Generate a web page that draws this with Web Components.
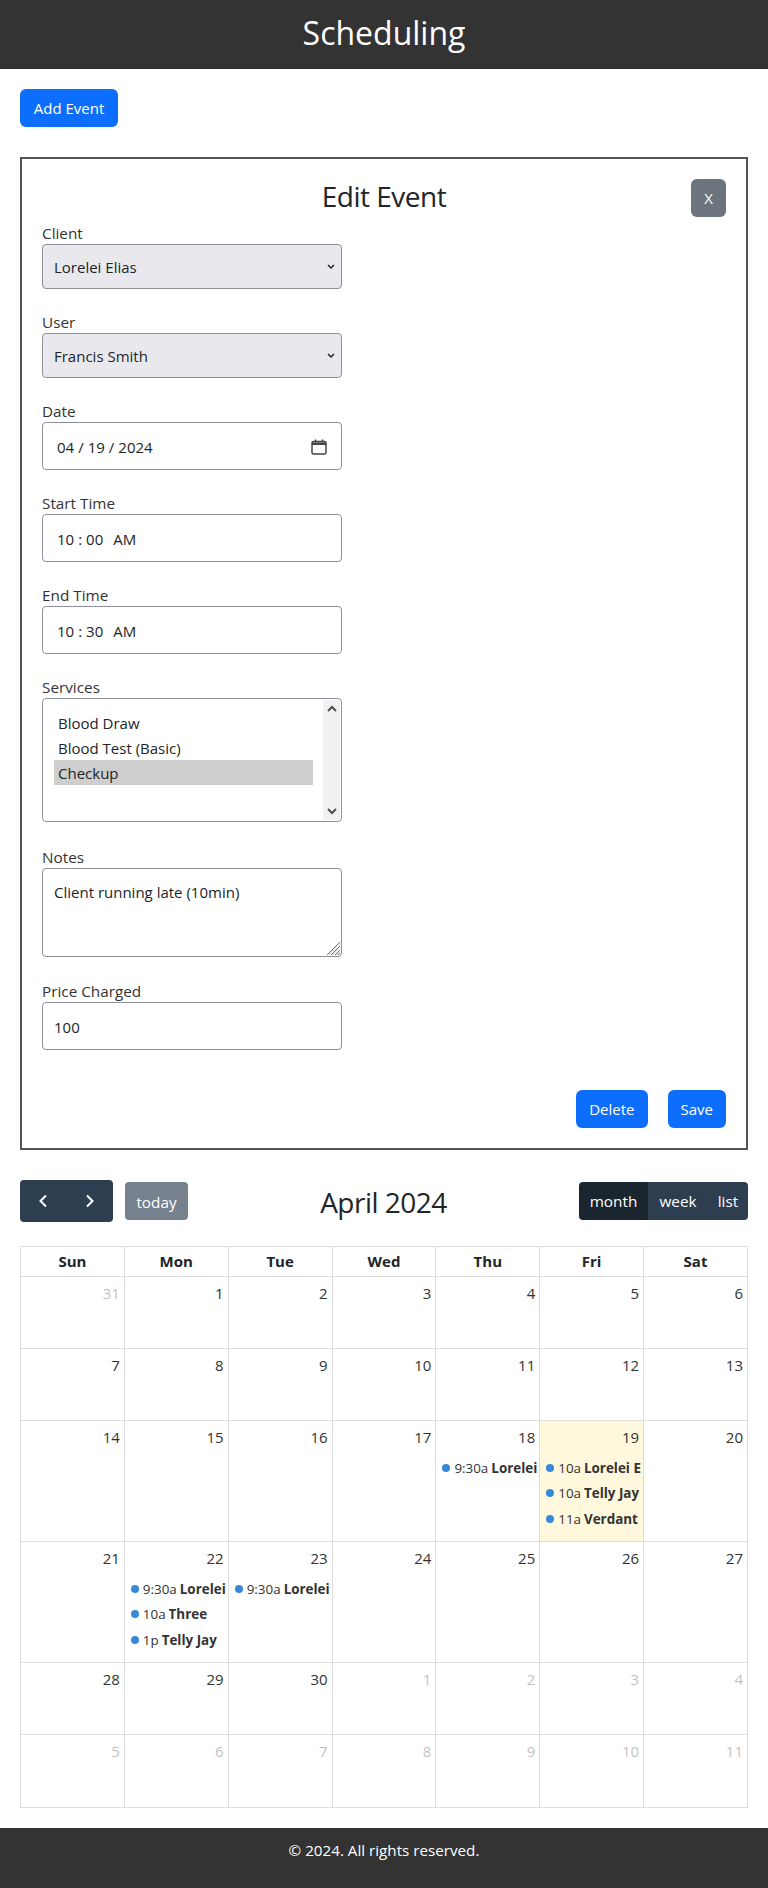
<!DOCTYPE html>
<html lang="en">
<head>
<meta charset="utf-8">
<title>Scheduling</title>
<style>
  html,body{margin:0;padding:0;}
  body{
    font-family:"Open Sans","Noto Sans",sans-serif;
    font-size:15px;
    line-height:1.5;
    color:#212529;
    background:#fff;
  }
</style>
</head>
<body>
<app-header>Scheduling</app-header>
<app-page>
  <blue-button slot="add">Add Event</blue-button>
  <event-form slot="form"></event-form>
  <cal-view slot="calendar"></cal-view>
</app-page>
<app-footer>© 2024. All rights reserved.</app-footer>

<script>
class AppHeader extends HTMLElement {
  constructor() {
    super();
    this.attachShadow({ mode: 'open' });
    this.shadowRoot.innerHTML = `
      <style>
        :host{
          display:block;
          background:#333;
          color:#fff;
          text-align:center;
          padding:13px 0 17px;
          font-size:32px;
          line-height:39px;
        }
      </style>
      <slot></slot>
    `;
  }
}
customElements.define('app-header', AppHeader);

class AppFooter extends HTMLElement {
  constructor() {
    super();
    this.attachShadow({ mode: 'open' });
    this.shadowRoot.innerHTML = `
      <style>
        :host{
          display:block;
          background:#333;
          color:#fff;
          text-align:center;
          padding:10px 0 27px;
          font-size:15.2px;
          line-height:24px;
        }
      </style>
      <slot></slot>
    `;
  }
}
customElements.define('app-footer', AppFooter);

class AppPage extends HTMLElement {
  constructor() {
    super();
    this.attachShadow({ mode: 'open' });
    this.shadowRoot.innerHTML = `
      <style>
        :host{
          display:flex;
          flex-direction:column;
          align-items:stretch;
          padding:20px;
          gap:30px;
        }
        .add{display:flex;}
      </style>
      <div class="add"><slot name="add"></slot></div>
      <slot name="form"></slot>
      <slot name="calendar"></slot>
    `;
  }
}
customElements.define('app-page', AppPage);

class BlueButton extends HTMLElement {
  constructor() {
    super();
    this.attachShadow({ mode: 'open' });
    this.shadowRoot.innerHTML = `
      <style>
        :host{
          display:inline-block;
          box-sizing:border-box;
          height:38px;
          padding:6px 13px;
          border-radius:6px;
          background:var(--btn-bg,#0d6efd);
          color:#fff;
          line-height:26px;
          text-align:center;
          cursor:pointer;
        }
        :host([slot=add]){min-width:98px;}
      </style>
      <slot></slot>
    `;
  }
}
customElements.define('blue-button', BlueButton);

class FormField extends HTMLElement {
  constructor() {
    super();
    this.attachShadow({ mode: 'open' });
    this.shadowRoot.innerHTML = `
      <style>
        :host{display:block;margin-bottom:20px;}
        .lbl{display:block;height:24px;line-height:27px;font-size:15.3px;color:#333;}
      </style>
      <span class="lbl"></span>
      <slot></slot>
    `;
  }
  connectedCallback(){
    this.shadowRoot.querySelector('.lbl').textContent=this.getAttribute('label');
  }
}
customElements.define('form-field', FormField);

class ListBox extends HTMLElement {
  constructor() {
    super();
    this.attachShadow({ mode: 'open' });
    this.shadowRoot.innerHTML = `
      <style>
        :host{
          display:flex;
          box-sizing:border-box;
          width:300px;
          height:124px;
          border:1px solid #8f8f9d;
          border-radius:4px;
          padding:1px;
          background:#fff;
        }
        .items{flex:1;min-width:0;padding:10px;}
        .track{
          flex:none;
          width:17px;
          background:#f1f1f1;
          display:flex;
          flex-direction:column;
          justify-content:space-between;
          align-items:center;
        }
        .track svg{display:block;margin:5px 0;}
      </style>
      <div class="items" role="listbox"><slot></slot></div>
      <div class="track">
        <svg width="10" height="7" viewBox="0 0 10 7"><path d="M1 6l4-4 4 4" fill="none" stroke="#505050" stroke-width="2"/></svg>
        <svg width="10" height="7" viewBox="0 0 10 7"><path d="M1 1l4 4 4-4" fill="none" stroke="#505050" stroke-width="2"/></svg>
      </div>
    `;
  }
}
customElements.define('list-box', ListBox);

class ListItem extends HTMLElement {
  constructor() {
    super();
    this.attachShadow({ mode: 'open' });
    this.shadowRoot.innerHTML = `
      <style>
        :host{display:block;height:25px;line-height:27px;padding:0 4px;white-space:nowrap;color:#212529;}
        :host([selected]){background:#cecece;}
      </style>
      <slot></slot>
    `;
  }
}
customElements.define('list-item', ListItem);

const CHEVRON="data:image/svg+xml,%3Csvg xmlns='http://www.w3.org/2000/svg' width='8' height='6'%3E%3Cpath d='M1 1l3 3 3-3' fill='none' stroke='%23222' stroke-width='1.5'/%3E%3C/svg%3E";
const CAL_ICON="data:image/svg+xml,%3Csvg xmlns='http://www.w3.org/2000/svg' width='16' height='16'%3E%3Crect x='1' y='2.5' width='14' height='12.5' rx='1.5' fill='none' stroke='%23444' stroke-width='1.5'/%3E%3Cpath d='M1 3.5h14v2.5H1z' fill='%23444'/%3E%3Cpath d='M4.5 .5v3M11.5 .5v3' stroke='%23444' stroke-width='1.5'/%3E%3C/svg%3E";
const GRIP="data:image/svg+xml,%3Csvg xmlns='http://www.w3.org/2000/svg' width='15' height='15'%3E%3Cpath d='M1 14L14 1M5 14l9-9M9 14l5-5M12 14l2-2' stroke='%23777' stroke-width='1'/%3E%3Cpath d='M2.5 14L14 2.5M6.5 14L14 6.5M10.5 14l3.5-3.5' stroke='%23ccc' stroke-width='1'/%3E%3C/svg%3E";

class EventForm extends HTMLElement {
  constructor() {
    super();
    this.attachShadow({ mode: 'open' });
    this.shadowRoot.innerHTML = `
      <style>
        :host{
          display:block;
          border:2px solid #555;
          padding:20px;
          box-sizing:border-box;
          height:993px;
        }
        .top{position:relative;height:41px;}
        h3{margin:0;text-align:center;font-size:28px;font-weight:400;line-height:34px;letter-spacing:-.5px;}
        .close{position:absolute;top:0;right:0;--btn-bg:#6c757d;}
        select,input,textarea{
          display:block;
          box-sizing:border-box;
          width:300px;
          font:inherit;
          color:#212529;
          padding:11px 11px 9px;
          border:1px solid #8f8f9d;
          border-radius:4px;
          background:#fff;
          margin:0;
        }
        select{
          height:45px;
          appearance:none;
          background:#e9e9ed url("${CHEVRON}") no-repeat right 6px center;
        }
        input{height:48px;}
        input::-webkit-datetime-edit{padding-left:2px;}
        input::-webkit-datetime-edit-text{padding:0 3px;}
        input[type=time]::-webkit-calendar-picker-indicator{display:none;}
        input[type=date]::-webkit-calendar-picker-indicator{
          width:16px;height:16px;padding:0;margin-right:3px;
          background:url("${CAL_ICON}") no-repeat center;
          opacity:1;
        }
        textarea{height:89px;line-height:24px;}
        textarea::-webkit-resizer{background:url("${GRIP}") no-repeat right bottom;}
        .services{margin-bottom:22px;}
        .notes{margin-bottom:21px;}
        .actions{display:flex;justify-content:flex-end;gap:20px;margin-top:40px;}
      </style>
      <div class="top">
        <h3>Edit Event</h3>
        <blue-button class="close">X</blue-button>
      </div>
      <form-field label="Client">
        <select><option>Lorelei Elias</option></select>
      </form-field>
      <form-field label="User">
        <select><option>Francis Smith</option></select>
      </form-field>
      <form-field label="Date"><input type="date" value="2024-04-19"></form-field>
      <form-field label="Start Time"><input type="time" value="10:00"></form-field>
      <form-field label="End Time"><input type="time" value="10:30"></form-field>
      <form-field label="Services" class="services">
        <list-box>
          <list-item>Blood Draw</list-item>
          <list-item>Blood Test (Basic)</list-item>
          <list-item selected>Checkup</list-item>
        </list-box>
      </form-field>
      <form-field label="Notes" class="notes"><textarea>Client running late (10min)</textarea></form-field>
      <form-field label="Price Charged"><input type="text" value="100"></form-field>
      <div class="actions">
        <blue-button>Delete</blue-button>
        <blue-button>Save</blue-button>
      </div>
    `;
  }
}
customElements.define('event-form', EventForm);

// month grid for april 2024, rows are sun..sat
const WEEKS=[
  [31,1,2,3,4,5,6],
  [7,8,9,10,11,12,13],
  [14,15,16,17,18,19,20],
  [21,22,23,24,25,26,27],
  [28,29,30,1,2,3,4],
  [5,6,7,8,9,10,11]
];
const ROW_H=[72,72,121,121,72,73];
const EVENTS={
  18:[['9:30a','Lorelei Elias']],
  19:[['10a','Lorelei Elias'],['10a','Telly Jay'],['11a','Verdant']],
  22:[['9:30a','Lorelei Elias'],['10a','Three'],['1p','Telly Jay']],
  23:[['9:30a','Lorelei Elias']]
};

class CalView extends HTMLElement {
  constructor() {
    super();
    this.attachShadow({ mode: 'open' });
    this.shadowRoot.innerHTML = `
      <style>
        :host{display:block;}
        .bar{display:flex;justify-content:space-between;align-items:center;margin-bottom:24px;height:42px;}
        .left{display:flex;align-items:center;gap:12px;}
        .title{font-size:28px;line-height:36px;padding-top:2px;letter-spacing:-.5px;}
        .group{display:flex;border-radius:4px;overflow:hidden;color:#fff;font-size:15.3px;}
        .group span{display:flex;align-items:center;justify-content:center;background:#2c3e50;height:38px;}
        .nav span{width:46.5px;height:42px;}
        .views span{width:60px;padding-top:1px;height:37px;}
        .views span.on{background:#1a252f;width:69px;}
        .views span.list{width:40px;}
        .today{background:#76818d;color:#fff;border-radius:4px;height:38px;line-height:40px;width:63px;text-align:center;font-size:15.3px;}
        table{width:100%;border-collapse:collapse;table-layout:fixed;}
        th,td{border:1px solid #ddd;padding:0;vertical-align:top;}
        th{height:29px;line-height:28px;font-weight:700;font-size:15px;color:#212529;}
        td.today-cell{background:#fff8dc;}
        .num{height:32px;box-sizing:border-box;padding:4px;text-align:right;line-height:24px;font-size:15px;color:#333;}
        td.other .num{opacity:.3;}
        .evs{padding-top:2px;}
        .ev{display:flex;align-items:center;height:25.5px;margin:0 2px 0 6px;overflow:hidden;white-space:nowrap;font-size:13.4px;color:#333;}
        .dot{flex:none;width:8px;height:8px;border-radius:50%;background:#3788d8;margin-right:4px;}
        .time{flex:none;}
        .ev b{margin-left:3px;min-width:0;overflow:hidden;}
      </style>
      <div class="bar">
        <div class="left">
          <div class="group nav">
            <span><svg width="10" height="14" viewBox="0 0 10 14"><path d="M8 1.5L2.5 7 8 12.5" fill="none" stroke="#fff" stroke-width="2"/></svg></span>
            <span><svg width="10" height="14" viewBox="0 0 10 14"><path d="M2 1.5L7.5 7 2 12.5" fill="none" stroke="#fff" stroke-width="2"/></svg></span>
          </div>
          <div class="today">today</div>
        </div>
        <div class="title">April 2024</div>
        <div class="group views">
          <span class="on">month</span><span>week</span><span class="list">list</span>
        </div>
      </div>
      <table>
        <thead><tr></tr></thead>
        <tbody></tbody>
      </table>
    `;
  }
  connectedCallback(){
    const head=this.shadowRoot.querySelector('thead tr');
    for(const d of ['Sun','Mon','Tue','Wed','Thu','Fri','Sat']){
      const th=document.createElement('th');
      th.textContent=d;
      head.appendChild(th);
    }
    const body=this.shadowRoot.querySelector('tbody');
    WEEKS.forEach((week,w)=>{
      const tr=document.createElement('tr');
      tr.style.height=ROW_H[w]+'px';
      week.forEach(n=>{
        const inMonth=!((w==0&&n>20)||(w>=4&&n<20));
        const td=document.createElement('td');
        if(!inMonth) td.className='other';
        if(inMonth&&n==19) td.classList.add('today-cell');
        const num=document.createElement('div');
        num.className='num';
        num.textContent=n;
        td.appendChild(num);
        const list=(inMonth&&EVENTS[n])||[];
        if(list.length){
          const evs=document.createElement('div');
          evs.className='evs';
          for(const [time,name] of list){
            const ev=document.createElement('div');
            ev.className='ev';
            ev.innerHTML='<span class="dot"></span><span class="time"></span><b></b>';
            ev.children[1].textContent=time;
            ev.children[2].textContent=name;
            evs.appendChild(ev);
          }
          td.appendChild(evs);
        }
        tr.appendChild(td);
      });
      body.appendChild(tr);
    });
  }
}
customElements.define('cal-view', CalView);
</script>
</body>
</html>
